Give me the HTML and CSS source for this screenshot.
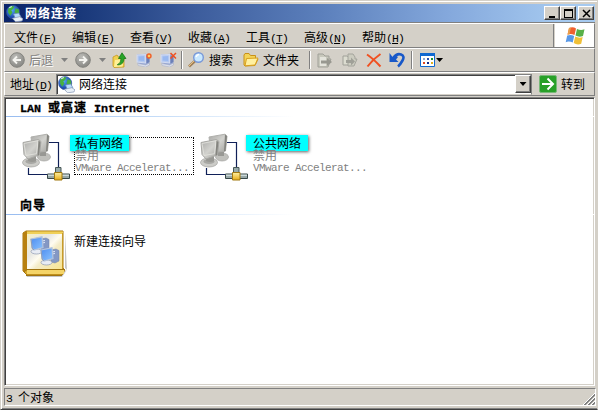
FILE: index.html
```html
<!DOCTYPE html>
<html lang="zh-CN">
<head>
  <meta charset="UTF-8">
  <title>网络连接</title>
  <link rel="stylesheet" href="styles.css">
</head>
<body>
  <!-- Shared icons -->
  <svg class="defs" width="0" height="0">
    <defs>
      <linearGradient id="screenGrey" x1="0" y1="0" x2="1" y2="1">
        <stop offset="0" stop-color="#a8a8a6"/><stop offset=".5" stop-color="#d2d2ce"/><stop offset="1" stop-color="#a0a09c"/>
      </linearGradient>
      <linearGradient id="screenBlue" x1="0" y1="0" x2="1" y2="1">
        <stop offset="0" stop-color="#4c8cf0"/><stop offset="1" stop-color="#8cc4ff"/>
      </linearGradient>
      <linearGradient id="gold" x1="0" y1="0" x2="0" y2="1">
        <stop offset="0" stop-color="#fff0a0"/><stop offset="1" stop-color="#e8ac18"/>
      </linearGradient>
      <linearGradient id="page" x1="0" y1="0" x2="1" y2="1">
        <stop offset="0" stop-color="#f8f0c0"/><stop offset=".35" stop-color="#e8e8e4"/><stop offset=".5" stop-color="#fffcf0"/><stop offset=".6" stop-color="#f4ecc8"/><stop offset="1" stop-color="#f8e490"/>
      </linearGradient>
      <radialGradient id="ball" cx=".4" cy=".3" r=".7">
        <stop offset="0" stop-color="#bcbcb8"/><stop offset="1" stop-color="#888884"/>
      </radialGradient>
      <radialGradient id="globeBlue" cx=".4" cy=".35" r=".65">
        <stop offset="0" stop-color="#58a8f8"/><stop offset="1" stop-color="#1038a0"/>
      </radialGradient>
      <symbol id="globe" viewBox="0 0 16 16">
        <circle cx="6.7" cy="6.7" r="6.2" fill="url(#globeBlue)" stroke="#3858a0" stroke-width=".6"/>
        <path d="M2 3.500L5 1l3 .5L6.500 4 5 5l1 2-2 3-2-3zM9 3l3 1 .5 4-2 1.500L8 7z" fill="#48b040"/>
        <path d="M3 2.500L5.500 1.500" stroke="#d8f8d0"/>
        <path d="M7 8.500l5-1 2 3.500-5 2z" fill="#b8dcf8" stroke="#6888b8" stroke-width=".7"/>
        <path d="M6 12.500l7-1.500 3 2-1 2-6 .8z" fill="#e8f0f8" stroke="#8898b8" stroke-width=".7"/>
      </symbol>
      <symbol id="pc" viewBox="0 0 13 14" preserveAspectRatio="none">
        <path d="M1 1.500L9 .8l3.500 1.500V10L9 12.500 2 10.500 1 9z" fill="#98a8d4"/>
        <path d="M1 2l8-.5V10L1 9z" fill="#b4c8f0" stroke="#d4dcf0"/>
        <path d="M2.500 3.500l5-.5v5L2.500 7.500z" fill="#98b8f0"/>
        <path d="M9.700 2.500v8L12.500 9V3z" fill="#6c80b8"/>
        <path d="M1.500 10.500l7.500 1.500 3.500-2v2L9 14l-7-1.500z" fill="#dce0ec" stroke="#a4acc4" stroke-width=".5"/>
      </symbol>
      <symbol id="netOff" viewBox="0 0 48 49">
        <path d="M27 9.500h9.500V35" fill="none" stroke="#102058" stroke-width="1.200"/>
        <path d="M6.500 35v6.500H25" fill="none" stroke="#102058" stroke-width="1.200"/>
        <ellipse cx="22" cy="24" rx="6.500" ry="4" fill="#c0c0bc" stroke="#a4a4a0" stroke-width=".7"/>
        <path d="M18 16h6v7h-6z" fill="#989894"/>
        <path d="M9 4L25 1.200l2 2L25.500 18 11 20z" fill="url(#screenGrey)" stroke="#b0b0ac"/>
        <path d="M25 1.200l2 2L25.500 18l-1.500.5z" fill="#84847f"/>
        <ellipse cx="9" cy="29.500" rx="8.500" ry="4.500" fill="#ccccc8" stroke="#a4a4a0" stroke-width=".7"/>
        <ellipse cx="9" cy="28.500" rx="5.500" ry="2.500" fill="#a8a8a4"/>
        <path d="M6 22l8-1v7q-4 2-8 0z" fill="#989894"/>
        <path d="M1 9.500L16.500 6.500l2.500 2L17.500 22 6 26 2 21.500z" fill="url(#screenGrey)" stroke="#a8a8a4"/>
        <path d="M2 10.500L16 7.700l-1.500 13L4 22.500z" fill="none" stroke="#e4e4e0" stroke-width=".8"/>
        <path d="M16.500 7.500l2 1.500-1.500 13-1.500.5z" fill="#84847f"/>
        <path d="M33.500 34.500h5.500v7h-5.500z" fill="#98aaaa" stroke="#485858"/>
        <path d="M25.500 41h22v4.500h-22z" fill="#98a8a8" stroke="#384848"/>
        <path d="M26 42.200h21" stroke="#e4f0f0"/>
        <path d="M32.500 39.500h7.500v7.500h-7.500z" fill="url(#gold)" stroke="#a07810"/>
      </symbol>
      <symbol id="bluePc" viewBox="0 0 20 19">
        <path d="M11 3l5-1 3 1.500V14l-4 2-4-1z" fill="#8498c4" stroke="#7080a8" stroke-width=".5"/>
        <path d="M12 5l3-.5M12 7l3-.5" stroke="#e0e8f8"/>
        <ellipse cx="6.500" cy="15.500" rx="5.500" ry="2.500" fill="#e8ecf4" stroke="#8c98b0" stroke-width=".7"/>
        <path d="M1 3L12 .8l1 10.700-9 2.500-2-2z" fill="url(#screenBlue)" stroke="#b4c4dc" stroke-width="1.200"/>
        <path d="M1 3l1.200 9L4 14" fill="none" stroke="#8090b0" stroke-width=".8"/>
      </symbol>
      <symbol id="folder" viewBox="0 0 16 14">
        <path d="M1 2l1-1.500h4L7.500 2.500h5V6H15l-3 6.500L2 13l-1-1z" fill="#f4d458" stroke="#c89018"/>
        <path d="M3.500 5.500L15 5l-3 7-10 .8z" fill="#fff0a0" stroke="#d8a020"/>
      </symbol>
    </defs>
  </svg>

  <div class="window">
    <div class="titlebar">
      <svg class="title-icon" width="17" height="17"><use href="#globe"/></svg>
      <span class="title-text">网络连接</span>
      <div class="win-btn"><svg width="13" height="11"><path d="M3 8h6v2H3z"/></svg></div>
      <div class="win-btn"><svg width="13" height="11"><path d="M2 1h9v9H2zM3 3v6h7V3z" fill-rule="evenodd"/></svg></div>
      <div class="win-btn close"><svg width="13" height="11"><path d="M3 2l7 7M10 2L3 9" stroke="#000" stroke-width="1.500"/></svg></div>
    </div>

    <div class="menubar">
      <div class="menus">
        <span class="menu">文件<span class="en">(<u>F</u>)</span></span>
        <span class="menu">编辑<span class="en">(<u>E</u>)</span></span>
        <span class="menu">查看<span class="en">(<u>V</u>)</span></span>
        <span class="menu">收藏<span class="en">(<u>A</u>)</span></span>
        <span class="menu">工具<span class="en">(<u>T</u>)</span></span>
        <span class="menu">高级<span class="en">(<u>N</u>)</span></span>
        <span class="menu">帮助<span class="en">(<u>H</u>)</span></span>
      </div>
      <div class="flag">
        <svg width="20" height="18" viewBox="0 0 20 18">
          <path d="M4 1q4-1.500 7 .5L9.500 8Q6 6.500 2.500 7.500z" fill="#f06030"/>
          <path d="M4 1l2-.5-1.500 7-2 .2z" fill="#e8a048"/>
          <path d="M12 2q4 1.800 7.500.2L18 9q-4 1.500-7.500-.5z" fill="#58b048"/>
          <path d="M2.200 8.500Q6 7.300 9.200 9l-1.500 6.500Q4 13.800.7 15.200z" fill="#5898e8"/>
          <path d="M10.200 9.500q4 2 7.500.5L16.200 16.800q-4 1.500-7.500-.7z" fill="#f0c038"/>
        </svg>
      </div>
    </div>

    <div class="toolbar">
      <svg width="16" height="16" viewBox="0 0 16 16"><circle cx="8" cy="8" r="7.300" fill="url(#ball)" stroke="#84847f"/><path d="M12 8H5M8 4.500L4.500 8 8 11.500" fill="none" stroke="#f4f4f0" stroke-width="1.900"/></svg>
      <span class="tool-text disabled back">后退</span>
      <i class="caret grey"></i>
      <svg class="forward" width="16" height="16" viewBox="0 0 16 16"><circle cx="8" cy="8" r="7.300" fill="url(#ball)" stroke="#84847f"/><path d="M4 8h7M8 4.500L11.500 8 8 11.500" fill="none" stroke="#f4f4f0" stroke-width="1.900"/></svg>
      <i class="caret grey"></i>
      <svg class="up" width="16" height="16" viewBox="0 0 16 16"><path d="M1 5l4-2 1.500 2H12v10l-10 .5L1 14z" fill="#f0d050" stroke="#c89820" stroke-width=".8"/><path d="M3 8l9-1-1.500 7.500L2 15z" fill="#fff098"/><path d="M5.500 12.500q3.500-1 3.500-6H6.500L10 .8l4 5.700h-2q0 6.500-6.500 6.500z" fill="#28a428" stroke="#107010" stroke-width=".7"/></svg>
      <svg class="connect" width="17" height="16" viewBox="0 0 17 16"><use href="#pc" y="1" width="14" height="14"/><circle cx="13" cy="4" r="2" fill="#ffd060" stroke="#f06028" stroke-width="1.400"/></svg>
      <svg class="disconnect" width="17" height="16" viewBox="0 0 17 16"><use href="#pc" y="1" width="14" height="14"/><path d="M10.500 1l5.500 5.500M16 1l-5.500 5.500" stroke="#f05020" stroke-width="1.500"/></svg>
      <i class="sep"></i>
      <svg class="search" width="17" height="16" viewBox="0 0 17 16"><path d="M1 14.500L7 9" stroke="#a08058" stroke-width="2.800"/><path d="M1 14L6.500 8.500" stroke="#e8c080"/><circle cx="10.500" cy="5.500" r="4.800" fill="#c8e8ff" stroke="#7898d8" stroke-width="1.400"/><path d="M8 5q1-2.500 3-2.500" fill="none" stroke="#fff" stroke-width="1.500"/></svg>
      <span class="tool-text">搜索</span>
      <svg class="folders" width="16" height="14"><use href="#folder"/></svg>
      <span class="tool-text">文件夹</span>
      <i class="sep sep2"></i>
      <svg width="17" height="15" viewBox="0 0 17 15"><path d="M1 1h5l2 2h4v3h2l-3 8H1z" fill="#c8c8bc" stroke="#a0a098"/><path d="M3 4h6v9H3z" fill="#e4e4dc"/><path d="M4 7.500h6V5l5 4-5 4v-2.500H4z" fill="#989890"/></svg>
      <svg class="copy" width="16" height="15" viewBox="0 0 16 15"><path d="M1 3h4l2 1.500h3V12H1z" fill="#dcdcd0" stroke="#a0a098"/><path d="M6 1h5l2 3v2h2l-3 7H6z" fill="#ccccc0" stroke="#a4a49c"/><path d="M4 7h5V4.500l4 4-4 4V10H4z" fill="#a0a098"/></svg>
      <svg width="16" height="15" viewBox="0 0 16 15"><path d="M1 1.500q6 4 13.500 12M14.500 1Q7 6 1.500 13.500" fill="none" stroke="#f05020" stroke-width="2"/></svg>
      <svg class="undo" width="16" height="16" viewBox="0 0 16 16"><path d="M4.500 5.500Q8 1 12 2.500t1.500 6-4.500 6" fill="none" stroke="#1858c8" stroke-width="2.600"/><path d="M.5 1v9h9L7 7.500l2-2.500-3-2-2.500 2z" fill="#1858c8"/></svg>
      <i class="sep"></i>
      <svg class="views" width="15" height="14" viewBox="0 0 15 14"><path d="M.5.500h14v13H.5z" fill="#fff" stroke="#1068d0"/><path d="M0 0h15v3H0z" fill="#1068d0"/><path d="M3 5h2v2H3z" fill="#90a8d0"/><path d="M7 5h2v2H7z" fill="#2850b0"/><path d="M11 5h2v2h-2z" fill="#189030"/><path d="M3 9h2v2H3z" fill="#e04820"/><path d="M7 9h2v2H7z" fill="#102888"/><path d="M11 9h2v2h-2z" fill="#e0b020"/></svg>
      <i class="caret"></i>
    </div>

    <div class="addressbar">
      <span class="address-label">地址<span class="en">(<u>D</u>)</span></span>
      <div class="address-field">
        <svg width="17" height="17"><use href="#globe"/></svg>
        <span class="address-text">网络连接</span>
        <div class="drop"><i class="caret"></i></div>
      </div>
      <div class="go">
        <svg width="18" height="18" viewBox="0 0 18 18"><rect x=".5" y=".5" width="17" height="17" rx="1.500" fill="#28a028" stroke="#78b878"/><path d="M3 9h11M8.500 3.500L14 9l-5.500 5.500" fill="none" stroke="#fff" stroke-width="2"/></svg>
        <span>转到</span>
      </div>
    </div>

    <div class="content">
      <h2 class="group-title">LAN <b>或高速</b> Internet</h2>
      <div class="rule"></div>
      <div class="items">
        <div class="item">
          <svg width="48" height="49"><use href="#netOff"/></svg>
          <div class="info focused">
            <span class="tag"></span>
            <div class="name">私有网络</div>
            <div class="state">禁用</div>
            <div class="device">VMware Accelerat...</div>
          </div>
        </div>
        <div class="item">
          <svg width="48" height="49"><use href="#netOff"/></svg>
          <div class="info">
            <span class="tag wide"></span>
            <div class="name">公共网络</div>
            <div class="state">禁用</div>
            <div class="device">VMware Accelerat...</div>
          </div>
        </div>
      </div>

      <h2 class="group-title wizard-title"><b>向导</b></h2>
      <div class="rule"></div>
      <div class="wizard">
        <svg width="46" height="49" viewBox="0 0 46 49">
          <path d="M4 45h35l6-5-2-2V3l2 37-5 7H5z" fill="#a0a0a0" opacity=".6"/>
          <path d="M1 3l3-2h37v37l2 2-3 5H5l-4-4z" fill="#d8a828" stroke="#a87810"/>
          <path d="M5 3h36v36H5z" fill="url(#page)"/>
          <path d="M5 1.500h36v2.500H5z" fill="#f0d058"/>
          <path d="M1 3l4-2v39l-4 2z" fill="#b88010"/>
          <path d="M5 39.500h37v4.500H5z" fill="#f4d468"/>
          <path d="M2 42l3-2.500h38M4 45.500h36" fill="none" stroke="#a07410"/>
          <path d="M40.500 3v36" stroke="#c89c28"/>
          <use href="#bluePc" x="8" y="6" width="20" height="19"/>
          <use href="#bluePc" x="18" y="17" width="20" height="19"/>
        </svg>
        <span class="wizard-text">新建连接向导</span>
      </div>
    </div>

    <div class="statusbar">
      <span><span class="en">3 </span>个对象</span>
      <svg class="grip" width="13" height="13" shape-rendering="crispEdges"><path d="M1 13L13 1M5 13l8-8M9 13l4-4" stroke="#fff"/><path d="M2 13L13 2M3 13L13 3M6 13l7-7M7 13l6-6M10 13l3-3M11 13l2-2" stroke="#808080"/></svg>
    </div>
  </div>
</body>
</html>
```

FILE: styles.css
```css
* {
  box-sizing: border-box;
}

body {
  margin: 0;
  overflow: hidden;
  background: #d4d0c8;
  color: #000;
  font: 12px/16px "Noto Sans CJK SC", sans-serif;
  white-space: nowrap;
}

svg {
  display: block;
  flex: none;
}

.defs {
  position: absolute;
}

.en {
  font-family: "Liberation Mono", monospace;
  font-size: 11.5px;
  line-height: 12px;
  letter-spacing: -0.9px;
  white-space: pre;
}

u {
  text-underline-offset: 1px;
}

.window {
  display: flex;
  flex-direction: column;
  width: 598px;
  height: 410px;
  padding: 3px 2px 2px 3px;
  border: 1px solid #d4d0c8;
  border-bottom-color: #404040;
  box-shadow: inset 1px 1px #fff, inset 0 -1px #808080;
}

/* Title bar */
.titlebar {
  display: flex;
  align-items: center;
  height: 18px;
  width: 591px;
  padding: 0 1px 0 2px;
  background: linear-gradient(to right, #0a246a 0, #173678 12%, #3c5c9c 32%, #5c80bc 54%, #84a8dc 75%, #a6caf0 95%);
}

.title-icon {
  margin-right: 2px;
}

.title-text {
  flex: 1;
  color: #fff;
  font-weight: bold;
  letter-spacing: 1px;
}

.win-btn {
  width: 16px;
  height: 14px;
  padding: 1px;
  background: #d4d0c8;
  border: 1px solid;
  border-color: #fff #404040 #404040 #fff;
  box-shadow: inset -1px -1px #808080;
}

.close {
  margin-left: 2px;
}

/* Menu */
.menubar,
.toolbar,
.addressbar {
  width: 591px;
  border: 1px solid #fff;
  border-right-color: #808080;
  border-bottom-color: #808080;
}

.menubar {
  display: flex;
  height: 25px;
  margin-top: 1px;
  box-shadow: 0 -1px #808080;
}

.menus {
  display: flex;
  flex: 1;
  align-items: center;
  padding: 2px 0 0 9px;
  border-right: 1px solid #808080;
}

.menu {
  width: 58px;
}

.flag {
  display: flex;
  align-items: center;
  justify-content: center;
  width: 39px;
  margin-left: 1px;
  background: #fff;
}

/* Toolbar */
.toolbar {
  display: flex;
  align-items: center;
  height: 24px;
  padding-left: 4px;
}

.disabled {
  color: #808080;
  text-shadow: 1px 1px #fff;
}

.back {
  margin: 0 8px 0 4px;
}

.caret {
  flex: none;
  width: 7px;
  height: 4px;
  background: #000;
  clip-path: polygon(0 0, 100% 0, 50% 100%);
}

.grey {
  background: #808080;
}

.forward {
  margin: 0 8px 0 7px;
}

.up {
  margin: 0 8px 0 6px;
}

.disconnect {
  margin: 0 4px 0 7px;
}

.sep {
  flex: none;
  width: 2px;
  height: 18px;
  background: #808080;
  border-right: 1px solid #fff;
}

.search {
  margin: 0 4px 0 5px;
}

.folders {
  margin: 0 4px 0 10px;
}

.sep2 {
  margin: 0 6px 0 10px;
}

.copy {
  margin: 0 8px;
}

.undo {
  margin: 0 6px 0 7px;
}

.views {
  margin: 0 1px 0 7px;
}

/* Address bar */
.addressbar {
  display: flex;
  align-items: center;
  height: 24px;
  padding-left: 5px;
}

.address-label {
  width: 46px;
}

.address-field {
  display: flex;
  align-items: center;
  width: 476px;
  height: 21px;
  padding-left: 1px;
  background: #fff;
  border: 1px solid;
  border-color: #808080 #808080 #d4d0c8 #808080;
  box-shadow: inset 1px 1px #404040;
}

.address-text {
  flex: 1;
  margin-left: 4px;
}

.drop {
  display: flex;
  align-items: center;
  justify-content: center;
  width: 16px;
  height: 18px;
  background: #d4d0c8;
  border: 1px solid;
  border-color: #fff #404040 #404040 #fff;
  box-shadow: inset -1px -1px #808080;
}

.go {
  display: flex;
  align-items: center;
  gap: 4px;
  margin-left: 7px;
}

/* Connection list */
.content {
  width: 591px;
  height: 289px;
  margin-top: 1px;
  background: #fff;
  border: 1px solid;
  border-color: #808080 #fff #fff #808080;
  box-shadow: inset 1px 1px #404040, inset -1px -1px #d4d0c8;
}

.group-title {
  height: 18px;
  margin: 0;
  padding-left: 15px;
  font: bold 11.67px/18px "Liberation Mono", monospace;
  -webkit-text-stroke: 0.3px #000;
}

.group-title b {
  font: bold 12px/18px "Noto Sans CJK SC", sans-serif;
  letter-spacing: 1px;
}

.rule {
  height: 1px;
  margin-left: 1px;
  background: linear-gradient(to right, #98bcf0, #c4dcf8 150px, #fff 288px);
}

.items {
  display: flex;
  padding: 16px 0 0 17px;
}

.item {
  display: flex;
  width: 178px;
}

.info {
  position: relative;
  width: 120px;
  height: 38px;
  margin: 4px 0 0 4px;
  padding-left: 1px;
  line-height: 12px;
}

.focused {
  outline: 1px dotted #000;
  outline-offset: -1px;
}

.tag {
  position: absolute;
  top: -2px;
  left: -4px;
  width: 59px;
  height: 16px;
  background: #00ffff;
  box-shadow: 1px 1px 3px #606060;
}

.wide {
  left: -6px;
  width: 62px;
}

.name {
  position: relative;
}

.state,
.device {
  position: relative;
  color: #808080;
}

.device {
  font: 11px/14px "Liberation Mono", monospace;
  letter-spacing: -0.6px;
}

.wizard-title {
  margin-top: 14px;
}

.wizard {
  display: flex;
  padding: 15px 0 0 17px;
}

.wizard-text {
  margin: 3px 0 0 6px;
}

/* Status bar */
.statusbar {
  display: flex;
  justify-content: space-between;
  align-items: center;
  width: 592px;
  height: 18px;
  margin-top: 2px;
  padding-left: 1px;
  border: 1px solid;
  border-color: #808080 #fff #fff #808080;
}

.grip {
  align-self: flex-end;
}
```
